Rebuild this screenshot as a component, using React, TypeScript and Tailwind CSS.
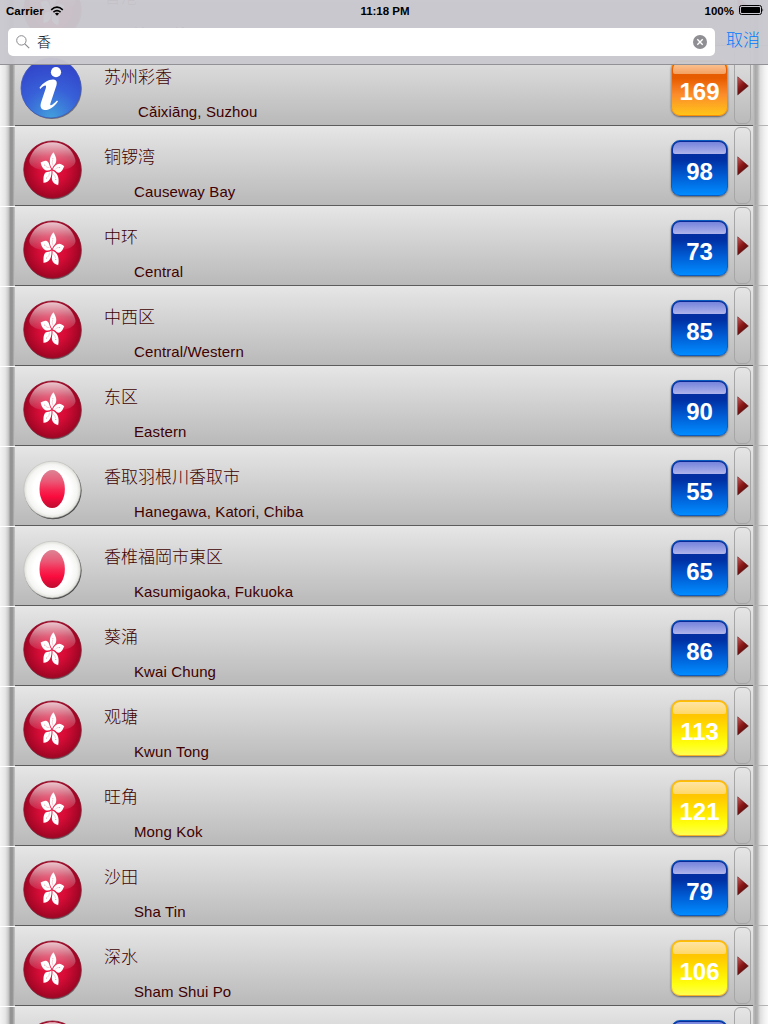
import clsx from "clsx";

type Flag = "info" | "hk" | "jp";
type Level = "blue" | "yellow" | "orange";

type Station = {
  name?: string;
  sub?: string;
  aqi?: number;
  flag: Flag;
};

const stations: Station[] = [
  { name: "香港", sub: "Hong Kong", flag: "hk" },
  { name: "苏州彩香", sub: "Cǎixiāng, Suzhou", aqi: 169, flag: "info" },
  { name: "铜锣湾", sub: "Causeway Bay", aqi: 98, flag: "hk" },
  { name: "中环", sub: "Central", aqi: 73, flag: "hk" },
  { name: "中西区", sub: "Central/Western", aqi: 85, flag: "hk" },
  { name: "东区", sub: "Eastern", aqi: 90, flag: "hk" },
  { name: "香取羽根川香取市", sub: "Hanegawa, Katori, Chiba", aqi: 55, flag: "jp" },
  { name: "香椎福岡市東区", sub: "Kasumigaoka, Fukuoka", aqi: 65, flag: "jp" },
  { name: "葵涌", sub: "Kwai Chung", aqi: 86, flag: "hk" },
  { name: "观塘", sub: "Kwun Tong", aqi: 113, flag: "hk" },
  { name: "旺角", sub: "Mong Kok", aqi: 121, flag: "hk" },
  { name: "沙田", sub: "Sha Tin", aqi: 79, flag: "hk" },
  { name: "深水", sub: "Sham Shui Po", aqi: 106, flag: "hk" },
  { flag: "hk" },
];

const levelOf = (aqi: number): Level =>
  aqi > 150 ? "orange" : aqi > 100 ? "yellow" : "blue";

const badgeClass: Record<Level, string> = {
  blue: "border-[#0a5cc0] bg-[linear-gradient(#0a2a98_0%,#0030a4_35%,#005cd4_65%,#008cff_100%)]",
  yellow:
    "border-[#f6b424] bg-[linear-gradient(#ffc000_0%,#ffc800_30%,#ffe800_58%,#ffff10_80%,#ffff50_100%)]",
  orange:
    "border-[#f88e08] bg-[linear-gradient(#e65c00_0%,#e85c00_32%,#fc8c2c_62%,#ffc418_100%)]",
};

const glossClass: Record<Level, string> = {
  blue: "from-[#7684dc] to-[#b0b4ea]",
  yellow: "from-[#ffe4a4] to-[#ffd868]",
  orange: "from-[#fcc898] to-[#f4a060]",
};

// one petal of the bauhinia, repeated every 72 degrees
const PETAL = "M0 -.8C-3.8 -3.8 -5 -9.2 -.3 -13.6C1.4 -11.8 4.3 -9.7 3.5 -6.4C2.9 -4.2 .6 -3.4 0 -.8Z";

function HongKong() {
  return (
    <svg viewBox="0 0 60 60" className="size-[60px]">
      <defs>
        <radialGradient id="hkBase" cx=".5" cy=".5" r=".52">
          <stop offset="0" stopColor="#ec1040" />
          <stop offset=".45" stopColor="#d60c36" />
          <stop offset="1" stopColor="#980522" />
        </radialGradient>
        <linearGradient id="hkGloss" x1="0" y1="0" x2="0" y2="1">
          <stop offset="0" stopColor="#fff" stopOpacity=".78" />
          <stop offset=".5" stopColor="#fff" stopOpacity=".34" />
          <stop offset="1" stopColor="#fff" stopOpacity=".06" />
        </linearGradient>
      </defs>
      <circle cx="30" cy="30.6" r="28.8" fill="#000" opacity=".45" />
      <circle cx="29.4" cy="29.6" r="28.7" fill="url(#hkBase)" stroke="#8e1730" strokeWidth=".7" />
      <path d="M6.4 20C9 9 18 2.2 29.4 2.2S50 9 52.4 20C53.6 27 42 31 29.4 31S5 27 6.4 20Z" fill="url(#hkGloss)" />
      <g transform="translate(29 29.8) scale(.92 1.3)" fill="#fff">
        {[8, 80, 152, 224, 296].map((deg) => (
          <g key={deg} transform={`rotate(${deg})`}>
            <path d={PETAL} />
            <path d="M.4 -3.5Q-1.2 -5.3 -.4 -7.6" fill="none" stroke="#e88c9e" strokeWidth=".35" />
            <circle cx="-.2" cy="-8.6" r=".4" fill="#d8405c" />
          </g>
        ))}
      </g>
    </svg>
  );
}

function Japan() {
  return (
    <svg viewBox="0 0 60 60" className="size-[60px]">
      <defs>
        <radialGradient id="jpBase">
          <stop offset=".65" stopColor="#fff" />
          <stop offset=".88" stopColor="#f5f5f3" />
          <stop offset="1" stopColor="#dcdcd8" />
        </radialGradient>
        <linearGradient id="jpSun" x1="0" y1="0" x2="0" y2="1">
          <stop offset="0" stopColor="#dc8494" />
          <stop offset=".3" stopColor="#ea5876" />
          <stop offset=".5" stopColor="#f52c55" />
          <stop offset=".7" stopColor="#fa0c3e" />
          <stop offset="1" stopColor="#bd0d30" />
        </linearGradient>
      </defs>
      <circle cx="30" cy="30.6" r="28.6" fill="#222" opacity=".75" />
      <circle cx="29.2" cy="29.6" r="28.4" fill="url(#jpBase)" stroke="#b8b8b4" strokeWidth=".5" />
      <ellipse cx="29.2" cy="29" rx="12.7" ry="19" fill="url(#jpSun)" />
    </svg>
  );
}

function Info() {
  return (
    <svg viewBox="0 0 64 64" className="size-16">
      <defs>
        <radialGradient id="infoBase" cx=".5" cy="1" r="1">
          <stop offset="0" stopColor="#42a0dc" />
          <stop offset=".5" stopColor="#3860d8" />
          <stop offset="1" stopColor="#3040c8" />
        </radialGradient>
      </defs>
      <circle cx="32.8" cy="33" r="30" fill="#000" opacity=".4" />
      <circle cx="32" cy="32" r="30" fill="url(#infoBase)" stroke="#4058b8" strokeWidth=".8" />
      <circle cx="37" cy="16.2" r="5.1" fill="#fff" />
      <path
        d="M20.5 31.8C24 26.5 30 23.3 34.3 23.5C37.6 23.7 38.4 26.3 37.4 29.5L31.4 47.6C30.6 49.9 32 50.6 38 44.4L39 45.2C35.2 51 29.5 54.6 25.3 54C21.2 53.4 21 49.8 22.2 46.1L26.7 32.4C27.8 29 26.4 28 21.3 32.9Z"
        fill="#fff"
      />
    </svg>
  );
}

function Badge({ aqi }: { aqi?: number }) {
  const level = levelOf(aqi ?? 0);
  return (
    <div
      className={clsx(
        "relative mt-3.5 mr-px ml-auto h-14 w-[57px] shrink-0 overflow-hidden rounded-[9px] border-[1.5px] shadow-[0_1px_2px_rgba(0,0,0,0.5)]",
        badgeClass[level]
      )}
    >
      <div
        className={clsx(
          "absolute inset-x-px top-px h-3 rounded-t-[7px] rounded-b-[2px] bg-linear-to-b",
          glossClass[level]
        )}
      />
      {aqi && (
        <p className="relative pt-[15px] text-center text-[24px] leading-[32px] font-bold text-white">
          {aqi}
        </p>
      )}
    </div>
  );
}

function Row({ name, sub, aqi, flag }: Station) {
  return (
    <li className="flex h-20 shrink-0">
      <div className="h-20 w-[15px] shrink-0 border-t border-white bg-[linear-gradient(90deg,#f4f4f4_0%,#e6e6e6_35%,#cacaca_55%,#949494_70%,#929292_82%,#c6c6c6_100%)]" />
      <div className="flex min-w-0 flex-1 border-b border-[#5c5c5c] bg-linear-to-b from-[#e6e6e6] to-[#b9b9b9]">
        <div className={clsx("w-[68px] shrink-0", flag === "info" ? "pt-[10px] pl-1" : "pt-3.5 pl-2")}>
          {flag === "info" ? <Info /> : flag === "jp" ? <Japan /> : <HongKong />}
        </div>
        {name && (
          <div className="pl-[21px] text-[#400000]">
            <h2 className="mt-5 text-[17px] leading-6 font-light">{name}</h2>
            <p
              className={clsx(
                "mt-[11px] text-[15px] leading-[22px] tracking-[0.12px]",
                flag === "info" ? "pl-[34px]" : "pl-[30px]"
              )}
            >
              {sub}
            </p>
          </div>
        )}
        {sub === "Hong Kong" ? <div className="ml-auto w-[58px]" /> : <Badge aqi={aqi} />}
        <div className="mt-[1px] ml-[5px] flex h-[77px] w-[17px] shrink-0 items-center rounded-[6px] border border-[#a6a6a6]">
          <svg viewBox="0 0 12 20" className="ml-[1.5px] h-5 w-3 shrink-0">
            <defs>
              <linearGradient id="arrow" x1="0" y1="0" x2=".6" y2="1">
                <stop offset="0" stopColor="#c86464" />
                <stop offset=".5" stopColor="#8c1818" />
                <stop offset="1" stopColor="#4a0808" />
              </linearGradient>
            </defs>
            <path d="M.7 .8L11.4 10L.7 19Z" fill="url(#arrow)" stroke="#5a2020" strokeWidth=".5" />
          </svg>
        </div>
        <div className="w-[2px] shrink-0" />
      </div>
      <div className="h-20 w-[15px] shrink-0 border-b border-[#b4b4b4] bg-[linear-gradient(90deg,#c0c0c0_0%,#a8a8a8_16%,#b4b4b4_30%,#dedede_48%,#f0f0f0_75%,#fafafa_100%)]" />
    </li>
  );
}

function StatusBar() {
  return (
    <div className="grid h-7 grid-cols-3 pt-[3px] pr-1 pl-[6px] text-[11.5px] leading-4 font-semibold text-black">
      <div className="flex items-start gap-[6px]">
        <span>Carrier</span>
        <svg viewBox="0 0 14 10" className="mt-[3px] h-[10px] w-[14px]" fill="none" stroke="#000" strokeWidth="1.6">
          <path d="M1.2 3.8Q7 -1.4 12.8 3.8" />
          <path d="M3.4 6.1Q7 3 10.6 6.1" />
          <path d="M4.9 7.6Q7 6 9.1 7.6L7 9.8Z" fill="#000" stroke="none" />
        </svg>
      </div>
      <div className="text-center">11:18 PM</div>
      <div className="flex justify-end gap-[5px]">
        <span>100%</span>
        <svg viewBox="0 0 25 10" className="mt-[2px] h-[10px] w-[25px]">
          <rect x=".5" y=".5" width="22" height="9" rx="2" fill="none" stroke="#000" />
          <rect x="2" y="2" width="19" height="6" rx=".8" />
          <path d="M23.5 3.2Q25 5 23.5 6.8Z" />
        </svg>
      </div>
    </div>
  );
}

export default function App() {
  return (
    <main className="relative h-[1024px] w-[768px] overflow-hidden bg-white font-['Liberation_Sans','Noto_Sans_CJK_SC',sans-serif]">
      <ul className="-mt-[34px] flex flex-col">
        {stations.map((s, i) => (
          <Row key={i} {...s} />
        ))}
      </ul>

      {/* bar floats over the scrolled list */}
      <header className="absolute inset-x-0 top-0 h-[65px] border-b border-[#929296] bg-[#c9c8ce]/96">
        <StatusBar />
        <div className="flex items-center pl-2">
          <div className="flex h-7 w-[707px] items-center rounded-[5px] bg-white px-2">
            <svg viewBox="0 0 14 14" className="size-[14px]" fill="none" stroke="#8a8a8f">
              <circle cx="5.4" cy="5.4" r="4.7" />
              <path d="M8.8 8.8L13.2 13.2" strokeWidth="1.2" />
            </svg>
            <span className="mb-px ml-[7px] text-[14px] leading-5 font-light text-black">香</span>
            <svg viewBox="0 0 14 14" className="ml-auto size-[14px]">
              <circle cx="7" cy="7" r="7" fill="#8e8e93" />
              <path d="M4.3 4.3L9.7 9.7M9.7 4.3L4.3 9.7" stroke="#fff" strokeWidth="1.4" />
            </svg>
          </div>
          <button className="mb-[3px] ml-[11px] text-[17px] leading-6 font-light text-[#007aff]">取消</button>
        </div>
      </header>
    </main>
  );
}
